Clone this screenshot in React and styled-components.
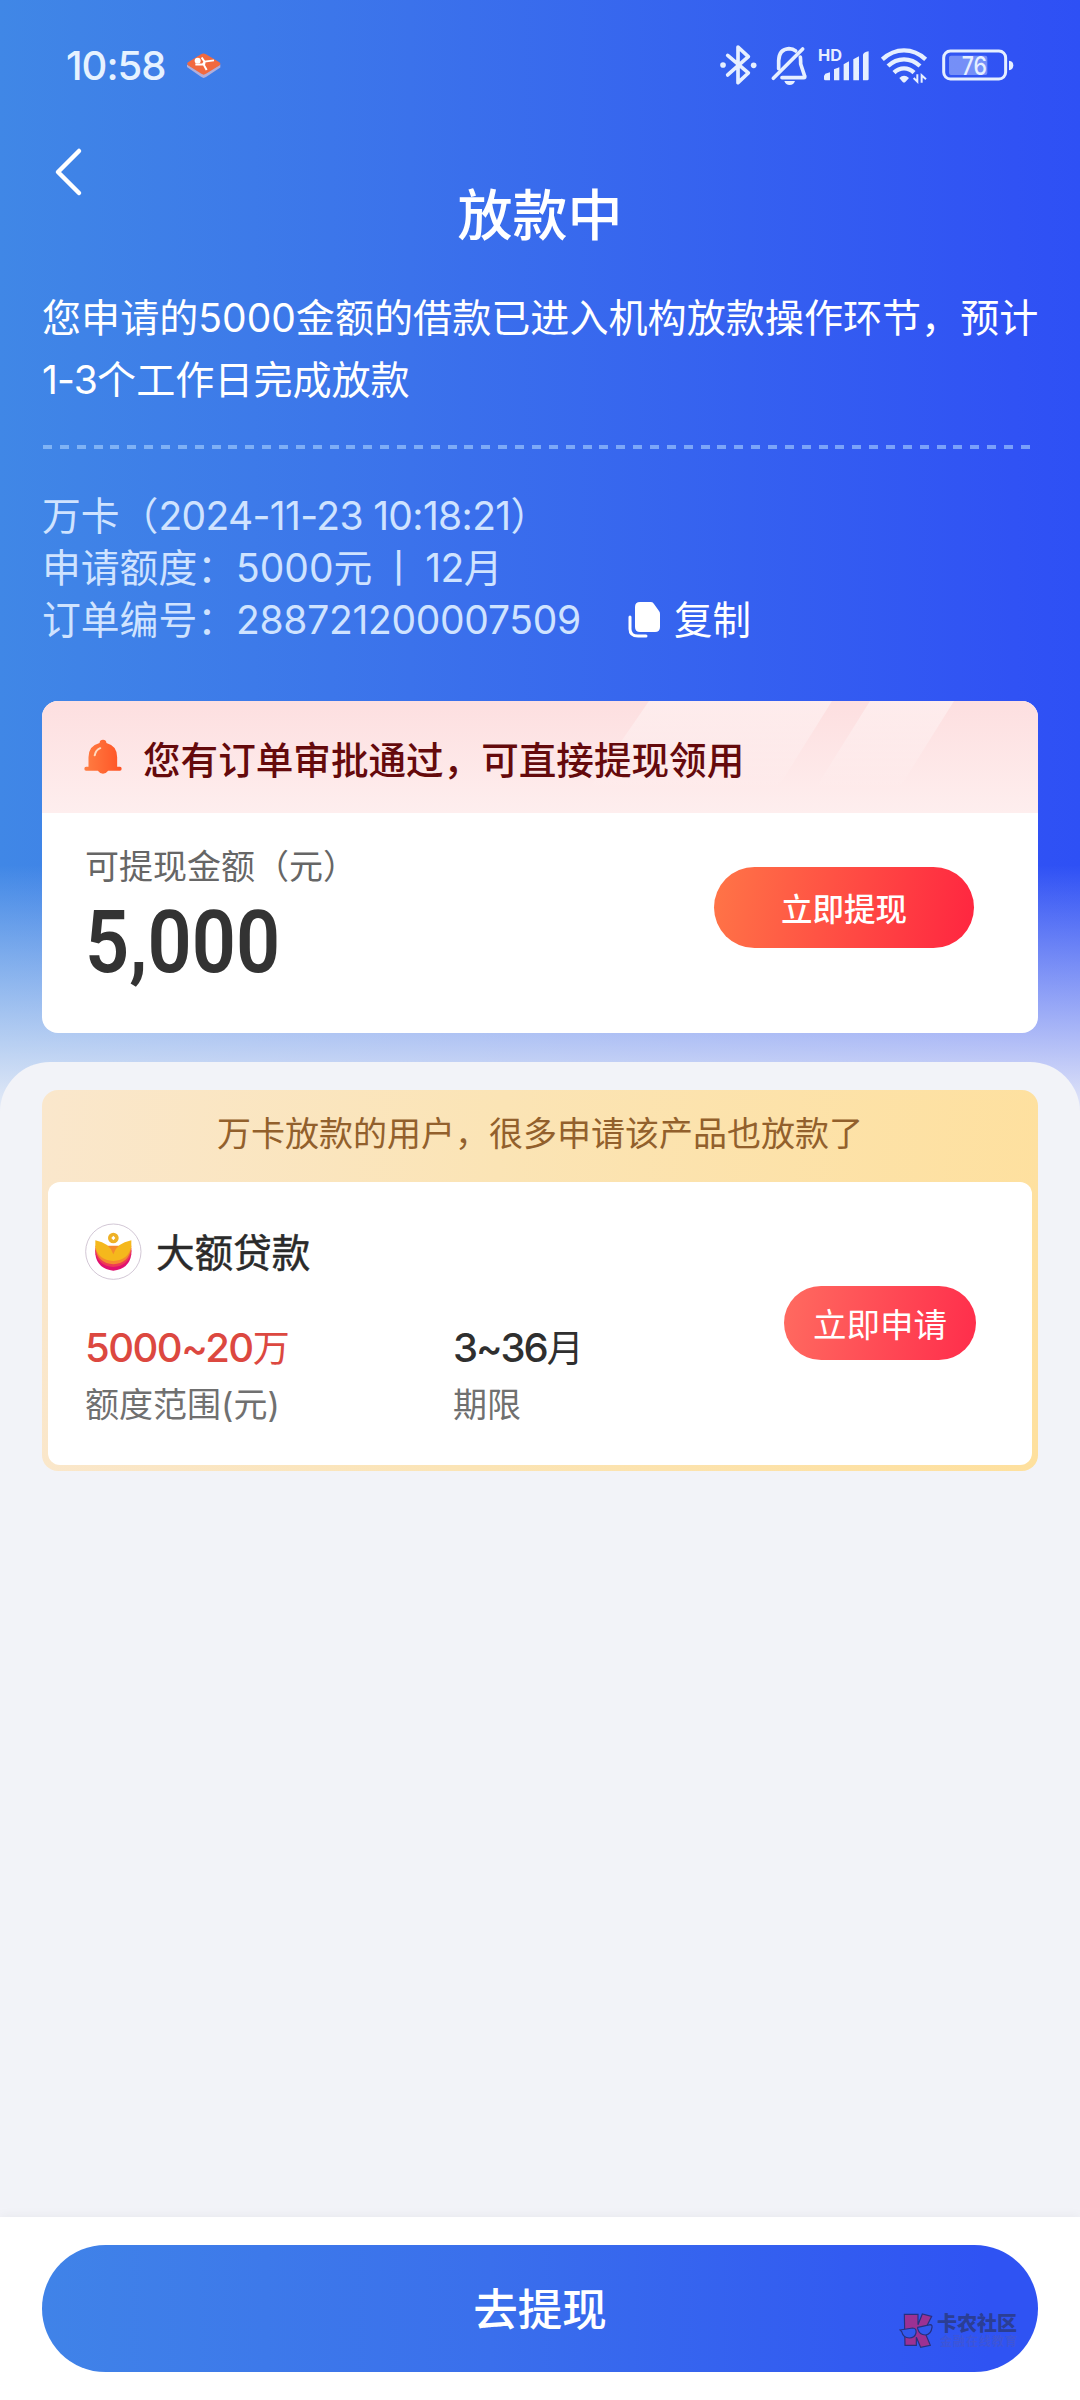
import React from "react";
import styled, { createGlobalStyle } from "styled-components";

const GlobalStyle = createGlobalStyle`
  body {
    margin: 0;
    background: #f2f3f8;
    font-family: Inter, "Noto Sans CJK SC", sans-serif;
  }
  * {
    box-sizing: border-box;
  }
`;

const Page = styled.div`
  width: 1080px;
  height: 2400px;
  display: flex;
  flex-direction: column;
  overflow: hidden;
`;
const Hero = styled.div`
  height: 1125px;
  flex-shrink: 0;
  display: flex;
  flex-direction: column;
  background: linear-gradient(180deg, rgba(242, 243, 248, 0) 865px, #f2f3f8 1130px),
    linear-gradient(90deg, #4087e6 0%, #3b72eb 38%, #3052f4 94%, #2e50f5 100%);
`;
const StatusBar = styled.div`
  height: 130px;
  display: flex;
  align-items: center;
  padding: 0 65px 0 66px;
`;
const Clock = styled.div`
  width: 120px;
  font-size: 40px;
  font-weight: 500;
  letter-spacing: -1px;
  color: #e6f2ff;
  white-space: nowrap;
`;
const StatusIcons = styled.div`
  display: flex;
  margin-left: auto;
`;
const NavBar = styled.div`
  height: 150px;
  display: grid;
  grid-template-columns: 200px 1fr 200px;
`;
const BackButton = styled.button`
  width: 40px;
  height: 56px;
  margin: 14px 0 0 49px;
  padding: 0;
  border: 0;
  background: none;
`;
const Title = styled.h1`
  margin: 55px 0 0;
  font-size: 55px;
  line-height: 60px;
  font-weight: 500;
  color: #fff;
  text-align: center;
`;
const Message = styled.p`
  margin: 7px 0 0 42px;
  font-size: 39.1px;
  line-height: 62px;
  color: #fff;
  white-space: nowrap;
`;
const Num = styled.span`
  font-size: ${(props) => props.$size || 39}px;
  font-weight: ${(props) => props.$weight || "inherit"};
  letter-spacing: ${(props) => props.$gap || 0}px;
`;
const DashedLine = styled.div`
  height: 4px;
  margin: 34px 43px 0;
  background: repeating-linear-gradient(
    90deg,
    rgba(170, 210, 255, 0.6) 0 9px,
    transparent 9px 16.86px
  );
`;
const OrderInfo = styled.div`
  margin: 41px 0 0 42px;
  font-size: 38.8px;
  line-height: 52px;
  color: #cfe3ff;
`;
const OrderLine = styled.div`
  height: 52px;
  display: flex;
  align-items: center;
  white-space: pre;
`;
const Divider = styled.span`
  margin: 0 7px;
`;
const CopyButton = styled.button`
  display: flex;
  align-items: center;
  gap: 14px;
  margin-left: 47px;
  padding: 0;
  border: 0;
  background: none;
  color: #fff;
  font: inherit;
  font-size: 38.5px;
`;
const WithdrawCard = styled.div`
  height: 332px;
  margin: 55px 42px 0;
  display: flex;
  flex-direction: column;
  border-radius: 16px;
  overflow: hidden;
  background: #fff;
`;
const Notice = styled.div`
  position: relative;
  height: 112px;
  display: flex;
  align-items: center;
  gap: 21px;
  padding-left: 42px;
  background: linear-gradient(180deg, #fddfe0, #feeeee);
  font-size: 37.6px;
  font-weight: 500;
  color: #650a0c;
`;
const Stripes = styled.svg`
  position: absolute;
  top: 0;
  left: 0;
`;
const NoticeText = styled.span`
  position: relative;
`;
const WithdrawBody = styled.div`
  flex: 1;
  display: flex;
  justify-content: space-between;
  padding: 0 64px 0 43px;
`;
const AmountLabel = styled.div`
  margin-top: 27px;
  font-size: 34px;
  line-height: 54px;
  color: #666;
`;
const Amount = styled.div`
  margin-top: 3px;
  font-family: Roboto, sans-serif;
  font-size: 87.5px;
  line-height: 90px;
  font-weight: 600;
  color: #333;
  transform: scaleX(0.885);
  transform-origin: left;
`;
const PillButton = styled.button`
  width: ${(props) => props.$width}px;
  height: ${(props) => props.$height}px;
  display: flex;
  justify-content: center;
  align-items: center;
  padding: 0 0 2px;
  border: 0;
  border-radius: 50px;
  background: linear-gradient(100deg, ${(props) => props.$from}, ${(props) => props.$to});
  font-family: inherit;
  font-size: ${(props) => props.$size}px;
  font-weight: ${(props) => props.$weight || 400};
  color: #fff;
`;
const WithdrawButton = styled(PillButton)`
  margin-top: 54px;
`;
const Sheet = styled.div`
  flex: 1;
  margin-top: -63px;
  padding: 28px 42px 0;
  border-radius: 50px 50px 0 0;
  background: #f2f3f8;
`;
const OfferCard = styled.div`
  height: 381px;
  display: flex;
  flex-direction: column;
  padding: 0 6px 6px;
  border-radius: 16px;
  background: linear-gradient(95deg, #fae7cc, #fbe4b5 45%, #fee09e);
`;
const OfferTip = styled.div`
  height: 92px;
  padding-bottom: 10px;
  display: flex;
  align-items: center;
  justify-content: center;
  font-size: 34px;
  color: #92602c;
`;
const OfferBody = styled.div`
  flex: 1;
  display: flex;
  justify-content: space-between;
  padding: 0 56px 0 37px;
  border-radius: 12px;
  background: #fff;
`;
const OfferButton = styled(PillButton)`
  margin-top: 104px;
`;
const ProductName = styled.div`
  display: flex;
  align-items: center;
  gap: 14px;
  height: 58px;
  margin-top: 41px;
`;
const ProductTitle = styled.span`
  padding-bottom: 5px;
  font-size: 38.6px;
  color: #2a2a2a;
  -webkit-text-stroke: 0.5px #2a2a2a;
`;
const Stats = styled.div`
  display: grid;
  grid-template-columns: 368px 200px;
  margin-top: 38px;
`;
const StatValue = styled.div`
  font-size: 37px;
  line-height: 58px;
  color: ${(props) => props.$color};
`;
const StatLabel = styled.div`
  font-size: 34px;
  line-height: 54px;
  color: #707070;
`;
const Footer = styled.div`
  position: relative;
  height: 183px;
  flex-shrink: 0;
  padding: 28px 42px 0;
  background: #fff;
  box-shadow: 0 -2px 10px rgba(0, 0, 0, 0.04);
`;
const MainButton = styled.button`
  width: 100%;
  height: 127px;
  padding: 0 0 5px;
  border: 0;
  border-radius: 64px;
  background: linear-gradient(90deg, #4083e8, #3a6fec 45%, #2f53f3 95%);
  font-family: inherit;
  font-size: 44.5px;
  font-weight: 500;
  color: #fff;
`;
const Watermark = styled.div`
  position: absolute;
  left: 899px;
  top: 95px;
  display: flex;
  gap: 2px;
`;
const WatermarkText = styled.div`
  display: flex;
  flex-direction: column;
  font-size: 20px;
  line-height: 24px;
  font-weight: 900;
  color: #2b3e94;
`;
const WatermarkSub = styled.div`
  margin-left: 3px;
  font-size: 12px;
  line-height: 12px;
  letter-spacing: 1px;
  font-weight: 700;
  color: #3d55d8;
`;

const AppBadge = () => (
  <svg width="36" height="27" viewBox="540 158 108 84" preserveAspectRatio="none">
    <path d="M543 197v8l43 31q7 5 14 0l43-30v-9l-50 28z" fill="#b0aedb" />
    <path d="M545 191q-4 5 2 9l39 26q7 5 14 0l40-26q6-5 0-10l-40-25q-8-5-15 0z" fill="#f1693f" />
    <circle cx="575" cy="185" r="9" fill="#fff" />
    <path
      d="M568 197l22 0 6-9 28-4M587 175l9 14-2 10 8 15"
      fill="none"
      stroke="#fff"
      strokeWidth="6"
    />
  </svg>
);

const BluetoothIcon = () => (
  <svg width="46.7" height="43.3" viewBox="110 70 140 130" fill="none" stroke="#e6efff">
    <path
      d="M142 107l62 53-31 29V82l31 29-62 55"
      strokeWidth="11"
      strokeLinecap="round"
      strokeLinejoin="round"
    />
    <circle cx="128" cy="136" r="8.5" fill="#e6efff" stroke="none" />
    <circle cx="220" cy="137" r="8.5" fill="#e6efff" stroke="none" />
  </svg>
);

const MutedIcon = () => (
  <svg width="50" height="43.3" viewBox="250 70 150 130" fill="none" stroke="#e6efff">
    <path
      d="M294 147v-24q1-34 31-36 12 0 20 7M359 112q1 5 1 21l12 36q2 5-3 5H304"
      strokeWidth="11"
      strokeLinecap="round"
      strokeLinejoin="round"
    />
    <path d="M366 88l-88 88" strokeWidth="11" strokeLinecap="round" />
    <path d="M311 184h32q-4 12-16 12t-16-12z" fill="#e6efff" stroke="none" />
  </svg>
);

const SignalIcon = () => (
  <svg width="63.3" height="43.3" viewBox="400 70 190 130" fill="#e6efff">
    <text x="412" y="124" fontSize="47" fontWeight="700" fontFamily="Inter" textLength="72" lengthAdjust="spacingAndGlyphs">
      HD
    </text>
    <path d="M430 169l4-7 14-4v24h-14q-4 0-4-4zM460 149l16-6v39h-16zM489 134l16-9v57h-16zM518 119l17-9v72h-17zM547 105q2-7 17-10v83q0 4-4 4h-13z" />
  </svg>
);

const WifiIcon = () => (
  <svg width="58" height="43.3" viewBox="590 70 174 130" fill="none" stroke="#e6efff">
    <path d="M606 119q29-27 65-27t65 27M623 139q21-20 48-20t48 20M641 159q13-13 30-13t30 13" strokeWidth="13" />
    <path d="M657 175q14-14 29 0l-11 12q-4 3-8 0z" fill="#e6efff" stroke="none" />
    <path d="M711 164v22l-11-11M724 189v-22l13 12" strokeWidth="6" />
  </svg>
);

const BatteryIcon = () => (
  <svg width="80" height="43.3" viewBox="764 70 240 130" fill="#e6efff">
    <rect x="790" y="94" width="186" height="84" rx="20" fill="none" stroke="#e6efff" strokeWidth="9" />
    <rect x="806" y="108" width="115" height="58" rx="6" opacity="0.38" />
    <path d="M986 123q13 1 13 14t-13 15z" />
    <text x="844" y="165" fontSize="77" fontWeight="500" fontFamily="Inter" textLength="76" lengthAdjust="spacingAndGlyphs">
      76
    </text>
  </svg>
);

const CopyIcon = () => (
  <svg width="32" height="38" viewBox="0 0 32 38">
    <path
      d="M12 1h11q2 0 3 2l5 7q1 1 1 3v13q0 5-5 5H12q-5 0-5-5V6q0-5 5-5z"
      fill="#fff"
    />
    <path d="M2 16v12q0 7 8 7h8" fill="none" stroke="#fff" strokeWidth="3" strokeLinecap="round" />
  </svg>
);

const BellIcon = () => (
  <svg width="38" height="36" viewBox="247 181 110 110" preserveAspectRatio="none">
    <defs>
      <linearGradient id="bell" x1="0" x2="1">
        <stop offset="0" stopColor="#ff7e43" />
        <stop offset="1" stopColor="#ff5325" />
      </linearGradient>
    </defs>
    <path
      d="M292 193q1-10 10-10t10 10q31 8 31 44v29h8q5 0 5 6t-5 6h-34q-6 9-15 9t-15-9h-34q-5 0-5-6t5-6h7v-29q0-36 32-44z"
      fill="url(#bell)"
    />
    <path d="M278 231q3-17 16-22" fill="none" stroke="#ffd9bd" strokeWidth="6" strokeLinecap="round" />
  </svg>
);

const ProductLogo = () => (
  <svg width="57" height="58" viewBox="74 70 171 174">
    <circle cx="159" cy="156" r="83" fill="#fff" stroke="#c9bccd" strokeWidth="2.5" />
    <path d="M105 150v14q6 44 54 49 48-5 54-49v-14z" fill="#e0106f" />
    <path d="M105 146v10q8 42 54 46 46-4 54-46v-10z" fill="#ee3b54" />
    <path d="M105 138v8q8 45 54 48 46-3 54-48v-8z" fill="#f58a2e" />
    <path d="M105 122q44 8 54 42 10-34 54-42v18q-8 42-54 44-46-2-54-44z" fill="#f5b81c" />
    <circle cx="159" cy="115" r="16" fill="#eeb126" />
    <path d="M159 108l6 7-6 7-6-7z" fill="#fff" />
  </svg>
);

const WatermarkLogo = () => (
  <svg width="36" height="37" viewBox="180 366 108 111" stroke="#26307f" strokeWidth="3.5">
    <path
      d="M196 373h41v31l13-32 28 7-22 44 18 43-29 6-13-30v24h-34z"
      fill="#9c3193"
    />
    <path d="M183 420l38-6q12 0 10 15-4 15-20 15-18 0-23-19zM236 412l38-8q6 0 5 8-3 22-20 23-18 0-23-19z" fill="#3158ee" />
  </svg>
);

export default function App() {
  return (
    <Page>
      <GlobalStyle />
      <Hero>
        <StatusBar>
          <Clock>10:58</Clock>
          <AppBadge />
          <StatusIcons>
            <BluetoothIcon />
            <MutedIcon />
            <SignalIcon />
            <WifiIcon />
            <BatteryIcon />
          </StatusIcons>
        </StatusBar>
        <NavBar>
          <BackButton>
            <svg width="40" height="56" viewBox="0 0 40 56" fill="none" stroke="#fff">
              <path d="M30 7L9 28l21 21" strokeWidth="4.5" strokeLinecap="round" strokeLinejoin="round" />
            </svg>
          </BackButton>
          <Title>放款中</Title>
        </NavBar>
        <Message>
          您申请的<Num>5000</Num>金额的借款已进入机构放款操作环节，预计
          <br />
          <Num $gap={-0.8}>1-3</Num>个工作日完成放款
        </Message>
        <DashedLine />
        <OrderInfo>
          <OrderLine>
            万卡（<Num $gap={-0.65}>2024-11-23 10:18:21</Num>）
          </OrderLine>
          <OrderLine>
            申请额度：<Num>5000</Num>元<Divider>丨</Divider><Num $gap={-0.5}>12</Num>月
          </OrderLine>
          <OrderLine>
            订单编号：<Num $gap={-0.3}>288721200007509</Num>
            <CopyButton>
              <CopyIcon />
              复制
            </CopyButton>
          </OrderLine>
        </OrderInfo>
        <WithdrawCard>
          <Notice>
            <Stripes width="996" height="112" viewBox="0 0 996 112">
              <defs>
                <linearGradient id="stripe" x1="0" y1="0" x2="0" y2="1">
                  <stop offset="0" stopColor="#fff" stopOpacity="0.42" />
                  <stop offset="0.8" stopColor="#fff" stopOpacity="0" />
                </linearGradient>
              </defs>
              <path d="M607 0h183l-70 112H530zM828 0h84l-70 112h-84z" fill="url(#stripe)" />
            </Stripes>
            <BellIcon />
            <NoticeText>您有订单审批通过，可直接提现领用</NoticeText>
          </Notice>
          <WithdrawBody>
            <div>
              <AmountLabel>可提现金额（元）</AmountLabel>
              <Amount>5,000</Amount>
            </div>
            <WithdrawButton $width={260} $height={81} $from="#ff7547" $to="#ff2540" $size={31.5} $weight={500}>
              立即提现
            </WithdrawButton>
          </WithdrawBody>
        </WithdrawCard>
      </Hero>
      <Sheet>
        <OfferCard>
          <OfferTip>万卡放款的用户，很多申请该产品也放款了</OfferTip>
          <OfferBody>
            <div>
              <ProductName>
                <ProductLogo />
                <ProductTitle>大额贷款</ProductTitle>
              </ProductName>
              <Stats>
                <StatValue $color="#dc4840">
                  <Num $size={40} $weight={500} $gap={-1.5}>5000~20</Num>万
                </StatValue>
                <StatValue $color="#2f2f2f">
                  <Num $size={40} $weight={500} $gap={-2}>3~36</Num>月
                </StatValue>
                <StatLabel>额度范围(元)</StatLabel>
                <StatLabel>期限</StatLabel>
              </Stats>
            </div>
            <OfferButton $width={192} $height={74} $from="#ff6b60" $to="#ff2d4b" $size={33.5}>
              立即申请
            </OfferButton>
          </OfferBody>
        </OfferCard>
      </Sheet>
      <Footer>
        <MainButton>去提现</MainButton>
        <Watermark>
          <WatermarkLogo />
          <WatermarkText>
            卡农社区
            <WatermarkSub>金融在线教育</WatermarkSub>
          </WatermarkText>
        </Watermark>
      </Footer>
    </Page>
  );
}
